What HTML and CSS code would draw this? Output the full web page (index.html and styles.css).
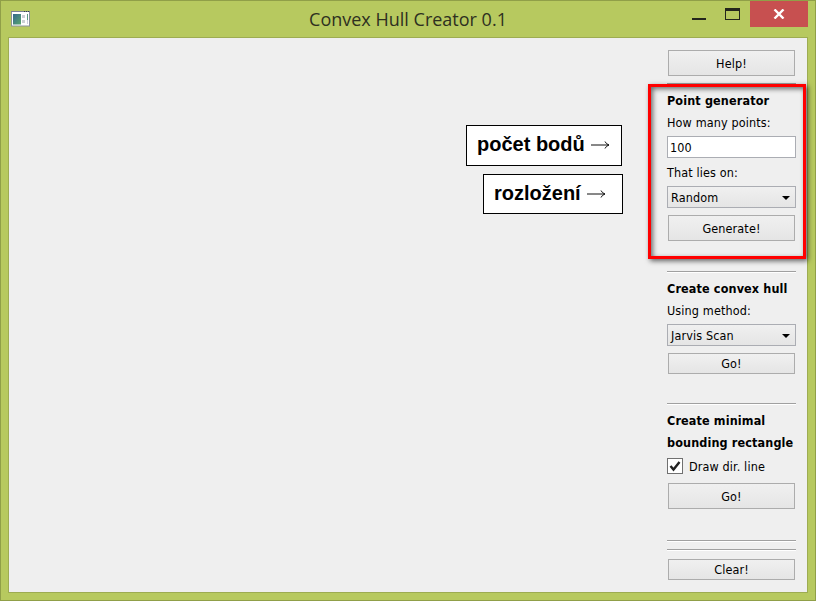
FILE: index.html
```
<!DOCTYPE html>
<html lang="en">
<head>
<meta charset="utf-8">
<title>Convex Hull Creator 0.1</title>
<link rel="stylesheet" href="styles.css">
</head>
<body>
<div class="window">
  <header class="titlebar">
    <svg class="app-icon" width="19" height="16" viewBox="0 0 19 16">
      <defs><linearGradient id="pane" x1="0" y1="0" x2="1" y2="1"><stop offset="0" stop-color="#35688f"/><stop offset="1" stop-color="#58a66d"/></linearGradient></defs>
      <rect x=".5" y=".5" width="18" height="14.500" fill="#fff" stroke="#8b929b"/>
      <path d="M0 .5h19" stroke="#7b8294"/>
      <path d="M13 .5h1M15 .5h1M17 .5h1" stroke="#344"/>
      <rect x="2" y="3" width="8" height="10.500" fill="url(#pane)"/>
      <path d="M11 4h3v3h-3zM11 9h3v3h-3z" fill="#ccd0d4"/>
      <path d="M16.500 3v6" stroke="#5a9a80"/>
      <path d="M16.500 9v4" stroke="#ccd"/>
    </svg>
    <h1 class="title">Convex Hull Creator 0.1</h1>
    <div class="controls">
      <svg class="glyph" width="61" height="26" viewBox="0 0 61 26">
        <path d="M3 18h14v2H3z" fill="#24261c"/>
        <path d="M36 8h15v12H36zM37 11v8h13v-8z" fill="#24261c" fill-rule="evenodd"/>
      </svg>
      <div class="close"><svg width="12" height="10" viewBox="0 0 12 10"><path d="M1.500 .5l9 9M10.500 .5l-9 9" stroke="#fff" stroke-width="2.400"/></svg></div>
    </div>
  </header>
  <main class="client">
    <section class="canvas">
      <div class="note note-count">počet bodů <svg width="19" height="10" viewBox="0 0 19 10"><path d="M0 5h18M14 1.500q1 2.500 4 3.500q-3 1-4 3.500" fill="none" stroke="#111"/></svg></div>
      <div class="note note-layout">rozložení <svg width="19" height="10" viewBox="0 0 19 10"><path d="M0 5h18M14 1.500q1 2.500 4 3.500q-3 1-4 3.500" fill="none" stroke="#111"/></svg></div>
    </section>
    <aside class="sidebar">
      <div class="button">Help!</div>
      <div class="rule rule-first"></div>
      <h2 class="heading">Point generator</h2>
      <div class="label">How many points:</div>
      <div class="field">100</div>
      <div class="label below-field">That lies on:</div>
      <div class="field select">Random<i class="arrow"></i></div>
      <div class="button after-select">Generate!</div>
      <div class="rule rule-hull"></div>
      <h2 class="heading">Create convex hull</h2>
      <div class="label">Using method:</div>
      <div class="field select">Jarvis Scan<i class="arrow"></i></div>
      <div class="button short after-select">Go!</div>
      <div class="rule rule-rect"></div>
      <h2 class="heading two-lines">Create minimal<br>bounding rectangle</h2>
      <div class="check"><span class="box"><svg width="14" height="14" viewBox="0 0 14 14"><path d="M2.500 7l3 3.500L11.500 3" fill="none" stroke="#222" stroke-width="2.400"/></svg></span>Draw dir. line</div>
      <div class="button after-check">Go!</div>
      <div class="rule rule-clear"></div>
      <div class="rule rule-second"></div>
      <div class="button short clear">Clear!</div>
    </aside>
    <div class="highlight"></div>
  </main>
</div>
</body>
</html>
```
FILE: styles.css
```
* { box-sizing: border-box; }
body { margin: 0; }
.window {
  position: relative;
  width: 816px;
  height: 601px;
  padding: 0 7px 7px;
  display: flex;
  flex-direction: column;
  background: #b7c95f;
  border: 1px solid #909f48;
}
.titlebar {
  height: 36px;
  flex: none;
  display: flex;
  justify-content: space-between;
  align-items: flex-start;
}
.app-icon { margin: 10px 0 0 3px; }
.title {
  margin: 0 0 0 97px;
  font: 400 18px/36px "Open Sans", sans-serif;
  color: #2e301f;
  white-space: nowrap;
}
.controls { display: flex; }
.glyph { display: block; margin-top: -1px; }
.close {
  width: 58px;
  height: 26px;
  display: flex;
  align-items: center;
  justify-content: center;
  padding-right: 1px;
  background: #c75050;
}
.client {
  position: relative;
  flex: 1;
  display: flex;
  background: #efefef;
  border: 1px solid #9dac52;
}
.canvas {
  flex: 1;
  display: flex;
  flex-direction: column;
  align-items: flex-end;
  padding: 87px 44px 0 0;
}
.note {
  display: flex;
  align-items: center;
  justify-content: space-between;
  background: #fff;
  border: 1px solid #000;
  font: 700 20px/36px "Liberation Sans", sans-serif;
  color: #000;
  white-space: nowrap;
}
.note-count { width: 156px; height: 41px; margin-right: 1px; padding: 0 11px 3px 10px; }
.note-layout { width: 140px; height: 40px; margin-top: 8px; padding: 0 16px 2px 10px; }
.note svg { position: relative; top: 1px; }
.sidebar {
  width: 140px;
  padding: 12px 11px 0 0;
  font: 12.5px/22px "DejaVu Sans Condensed", "DejaVu Sans", sans-serif;
  font-stretch: condensed;
  letter-spacing: .13px;
  color: #000;
  white-space: nowrap;
}
.button {
  height: 26px;
  margin: 0 1px;
  padding-top: 1px;
  display: flex;
  align-items: center;
  justify-content: center;
  border: 1px solid #acacac;
  background: linear-gradient(#f0f0f0, #e5e5e5);
}
.short { height: 21px; }
.rule { height: 2px; background: #fff; border-top: 1px solid #a0a0a0; }
.rule-first { margin-top: 7px; }
.rule-hull { margin-top: 30px; }
.rule-rect { margin-top: 29px; }
.rule-clear { margin-top: 31px; }
.rule-second { margin-top: 7px; }
.heading { height: 22px; margin: 4px 0 0; padding-top: 1px; font-size: 12.5px; font-weight: 700; }
.two-lines { height: 44px; }
.label { height: 22px; padding-top: 1px; }
.field {
  height: 22px;
  margin-top: 3px;
  padding: 0 3px 0 2px;
  border: 1px solid #abadb3;
  background: #fff;
}
.below-field { margin-top: 3px; }
.select {
  display: flex;
  align-items: center;
  justify-content: space-between;
  padding: 1px 5px 0 3px;
  background: linear-gradient(#f0f0f0, #e5e5e5);
}
.arrow { border: 4px solid transparent; border-top-color: #000; border-bottom: 0; }
.after-select { margin-top: 7px; }
.check { display: flex; gap: 6px; height: 16px; margin-top: 5px; line-height: 18px; }
.box { width: 16px; height: 16px; border: 1px solid #707070; background: #fff; }
.box svg { display: block; }
.after-check { margin-top: 9px; }
.clear { margin-top: 8px; }
.highlight {
  position: absolute;
  left: 639px;
  top: 46px;
  width: 158px;
  height: 175px;
  border: 3px solid #f00;
  box-shadow: 2px 2px 5px rgba(0, 0, 0, .6), inset 2px 2px 5px rgba(0, 0, 0, .55);
}
```
